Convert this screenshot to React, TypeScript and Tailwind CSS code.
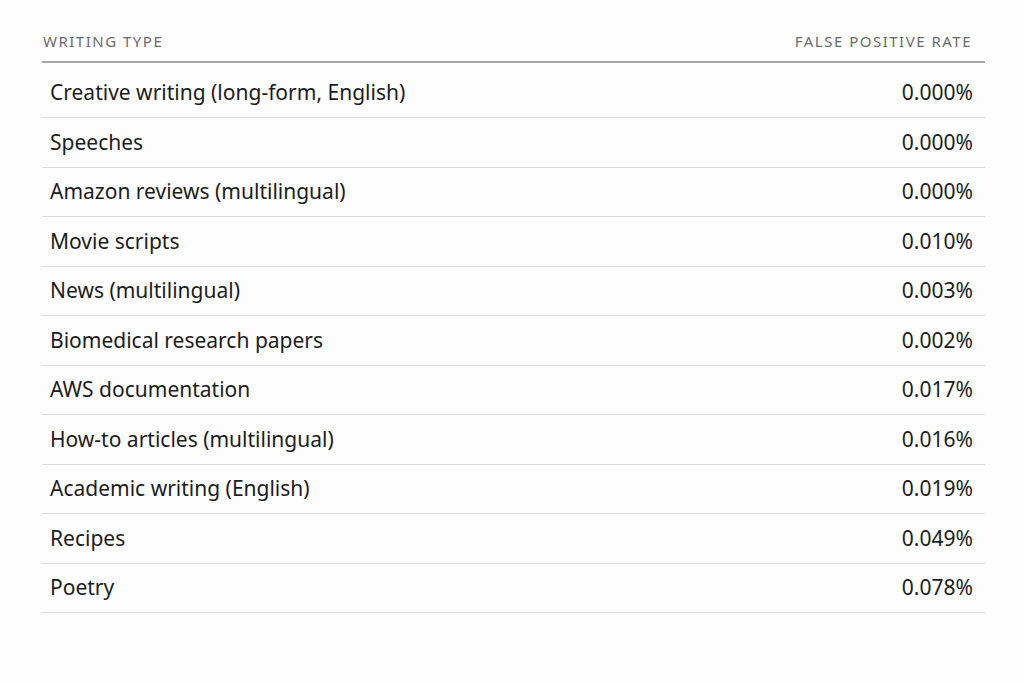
const rows = [
  ["Creative writing (long-form, English)", "0.000%"],
  ["Speeches", "0.000%"],
  ["Amazon reviews (multilingual)", "0.000%"],
  ["Movie scripts", "0.010%"],
  ["News (multilingual)", "0.003%"],
  ["Biomedical research papers", "0.002%"],
  ["AWS documentation", "0.017%"],
  ["How-to articles (multilingual)", "0.016%"],
  ["Academic writing (English)", "0.019%"],
  ["Recipes", "0.049%"],
  ["Poetry", "0.078%"],
];

export default function App() {
  return (
    <div className="w-[1024px] h-[683px] bg-[#fdfdfd] pt-[30px] px-[42px] font-['Inter',sans-serif] text-[#1c1c1c]">
      <div className="w-[943px]">
        <div className="flex justify-between h-[33px] border-b-2 border-[#a6a6a6] text-[15px] tracking-[0.1em] text-[#6b6b6b] px-[1px]">
          <span>WRITING TYPE</span>
          <span className="pr-[12px]">FALSE POSITIVE RATE</span>
        </div>
        {rows.map(([name, rate], i) => (
          <div
            key={name}
            className={`flex justify-between items-center border-b border-[#dcdcdc] text-[21px] px-[8px] pr-[12px] ${i === 0 ? "h-[55px] pt-[6px]" : "h-[49.5px]"}`}
          >
            <span>{name}</span>
            <span>{rate}</span>
          </div>
        ))}
      </div>
    </div>
  );
}
